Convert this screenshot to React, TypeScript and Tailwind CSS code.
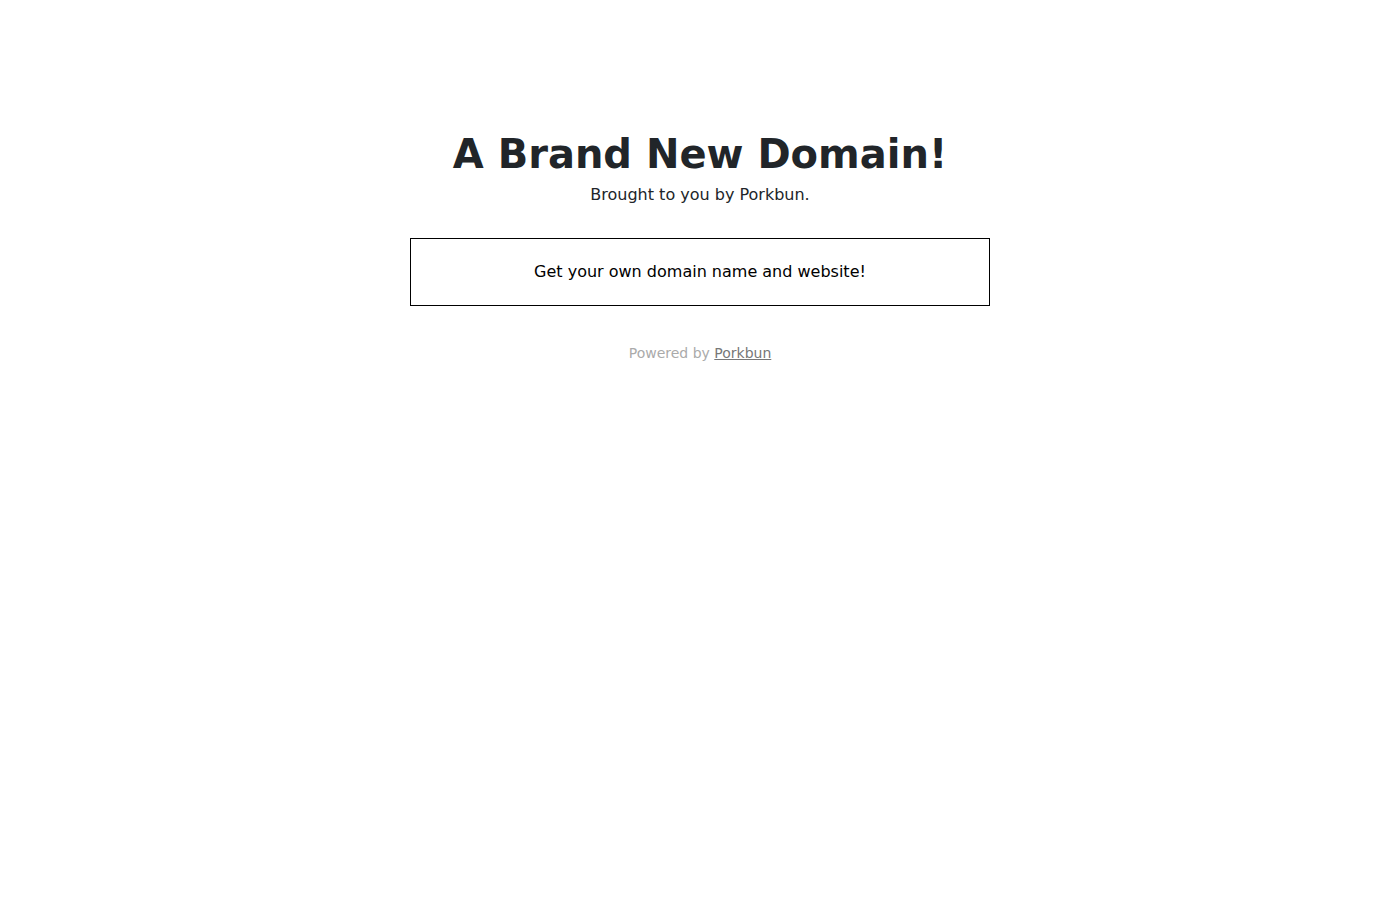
export default function App() {
  return (
    <div className="min-h-screen bg-white text-[#212529] [font-family:'DejaVu_Sans',sans-serif]">
      <div className="flex flex-col items-center pt-[130px]">
        <h1 className="text-[40px] font-bold leading-[48px] text-[#212529]">A Brand New Domain!</h1>
        <p className="mt-[5px] text-[16px] leading-[24px]">Brought to you by Porkbun.</p>
        <div className="mt-[31px] w-[580px] border border-black px-4 py-[21px] text-center text-[16px] leading-[24px] text-black">
          Get your own domain name and website!
        </div>
        <p className="mt-[37px] text-[14px] leading-[21px] text-[#aaaaaa]">
          Powered by <a href="#" className="text-[#777777] underline">Porkbun</a>
        </p>
      </div>
    </div>
  );
}
